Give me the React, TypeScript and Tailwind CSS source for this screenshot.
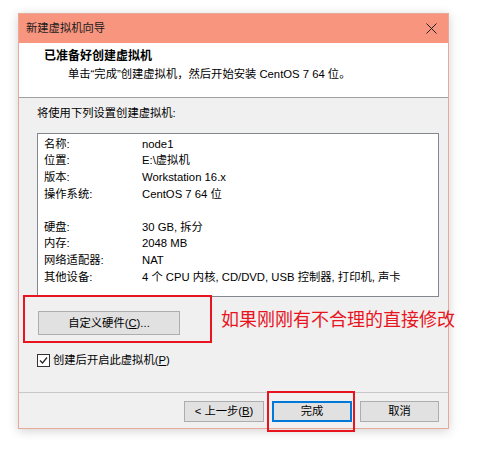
import React from "react"

const rows: [string, string][] = [
  ["名称:", "node1"],
  ["位置:", "E:\\虚拟机"],
  ["版本:", "Workstation 16.x"],
  ["操作系统:", "CentOS 7 64 位"],
  ["", ""],
  ["硬盘:", "30 GB, 拆分"],
  ["内存:", "2048 MB"],
  ["网络适配器:", "NAT"],
  ["其他设备:", "4 个 CPU 内核, CD/DVD, USB 控制器, 打印机, 声卡"],
]

export default function App() {
  return (
    <div
      className="w-[497px] h-[452px] bg-white overflow-hidden pt-[13px] pl-[18px] text-[11.3px] text-black"
      style={{ fontFamily: '"Liberation Sans", "Noto Sans CJK SC", sans-serif' }}
    >
      <div className="relative w-[431px] h-[416px] flex flex-col bg-[#f0f0f0] border border-[#e9a99a] shadow-[0_2px_10px_rgba(0,0,0,0.18)]">
        {/* title bar */}
        <div className="h-[29px] shrink-0 flex items-center justify-between bg-[#f8957f] pl-[7px] pr-[10px]">
          <span className="text-[#1a1a1a]">新建虚拟机向导</span>
          <svg width="11" height="11" viewBox="0 0 11 11" className="mr-[1px]">
            <path d="M0.5 0.5L10.5 10.5M10.5 0.5L0.5 10.5" stroke="#222" strokeWidth="1" />
          </svg>
        </div>

        {/* header */}
        <div className="h-[55px] shrink-0 bg-white border-b border-[#a0a0a0] pt-[5px]">
          <div className="pl-[25px] font-bold text-[12px] leading-[16px]">已准备好创建虚拟机</div>
          <div className="pl-[49px] leading-[16px] mt-[2px]">
            单击“完成”创建虚拟机，然后开始安装 CentOS 7 64 位。
          </div>
        </div>

        {/* body */}
        <div className="flex-1 flex flex-col pl-[18px]">
          <div className="mt-[7px] leading-[16px]">将使用下列设置创建虚拟机:</div>
          <div className="mt-[12px] w-[402px] h-[164px] bg-white border border-[#828790] pt-[2px] pl-[6px]">
            {rows.map(([k, v], i) => (
              <div key={i} className="flex h-[16.6px] items-center">
                <span className="w-[98px] shrink-0">{k}</span>
                <span>{v}</span>
              </div>
            ))}
          </div>

          <button className="mt-[14px] ml-[1px] w-[142px] h-[24px] bg-[#e1e1e1] border border-[#adadad]">
            自定义硬件(<span className="underline">C</span>)...
          </button>

          <div className="mt-[17px] flex items-center gap-[3px]">
            <span className="w-[13px] h-[13px] border border-[#333] bg-white flex items-center justify-center">
              <svg width="9" height="9" viewBox="0 0 9 9">
                <path d="M1 4.5L3.5 7L8 1.5" stroke="#222" strokeWidth="1.2" fill="none" />
              </svg>
            </span>
            <span>
              创建后开启此虚拟机(<span className="underline">P</span>)
            </span>
          </div>
        </div>

        {/* footer */}
        <div className="h-[36px] shrink-0 border-t border-[#c8c8c8] flex items-start justify-end gap-[8px] pr-[9px] pt-[8px]">
          <button className="w-[80px] h-[21px] bg-[#e1e1e1] border border-[#adadad]">
            &lt; 上一步(<span className="underline">B</span>)
          </button>
          <button className="w-[80px] h-[21px] bg-[#e1e1e1] border-2 border-[#0078d7]">
            完成
          </button>
          <button className="w-[79px] h-[21px] bg-[#e1e1e1] border border-[#adadad]">
            取消
          </button>
        </div>

        {/* annotations */}
        <div className="absolute left-[4px] top-[281px] w-[189px] h-[48px] border-2 border-[#e8141e]" />
        <div
          className="absolute left-[202px] top-[292px] text-[18px] leading-[24px] text-[#e8141e] whitespace-nowrap"
          style={{ fontFamily: '"Noto Sans CJK SC", sans-serif' }}
        >
          如果刚刚有不合理的直接修改
        </div>
        <div className="absolute left-[248px] top-[377px] w-[88px] h-[41px] border-2 border-[#e8141e]" />
      </div>
    </div>
  )
}
